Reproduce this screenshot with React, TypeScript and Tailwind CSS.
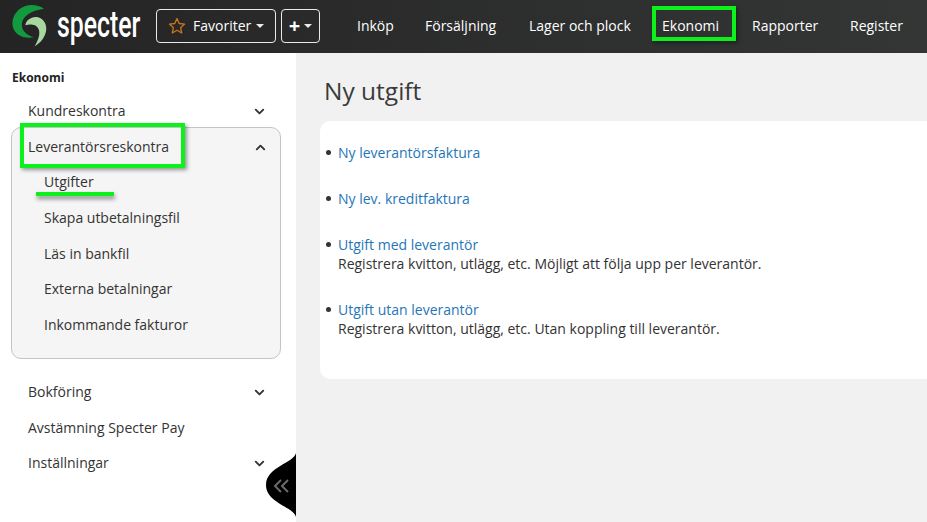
import React from 'react';
import { ChevronDown, ChevronUp } from 'lucide-react';

const Logo = () => (
  <svg width="42" height="46" viewBox="36 10 126 138" fill="none">
    <path
      d="M132 24C110 8 78 10 60 24C42 38 35 58 38 76C42 100 68 116 102 110C80 104 62 90 66 66C70 46 92 30 132 24Z"
      fill="#149a3e"
    />
    <path
      d="M76 74C78 58 96 46 114 50C132 54 142 74 138 92C134 112 120 128 104 137C112 122 119 108 118 94C117 82 110 74 98 72C90 71 84 71 76 74Z"
      fill="#a8d8a0"
    />
  </svg>
);

const Star = () => (
  <svg width="18" height="18" viewBox="0 0 18 18" fill="none">
    <path
      d="M9 1.500 11.200 6.500 16.600 7.100 12.600 10.700 13.700 16 9 13.300 4.300 16 5.400 10.700 1.400 7.100 6.800 6.500Z"
      stroke="#c9771a"
      strokeWidth="1.3"
      strokeLinejoin="round"
    />
  </svg>
);

const Caret = () => <span className="h-0 w-0 border-x-[4px] border-t-[4px] border-x-transparent border-t-white/90" />;

const SideRow = ({ label, open, chevron = true, h = 'h-[35.75px]' }: { label: string; open?: boolean; chevron?: boolean; h?: string }) => (
  <div className={`flex ${h} items-center justify-between pl-[28px] pr-[29px] text-[14px] text-[#333]`}>
    <span>{label}</span>
    {chevron && (open ? <ChevronUp className="mt-[2px]" size={15} strokeWidth={3} /> : <ChevronDown className="mt-[2px]" size={15} strokeWidth={3} />)}
  </div>
);

const SubRow = ({ label }: { label: string }) => (
  <div className="flex h-[35.75px] items-center pl-[32px] text-[14px] text-[#333]">{label}</div>
);

function ListItem({ link, text }: { link: string; text?: string }) {
  return (
    <div className="mb-[27px] flex">
      <span className="mt-[7px] mr-[7px] h-[5px] w-[5px] shrink-0 rounded-full bg-[#333]" />
      <div>
        <a className="block text-[#1f76b8]">{link}</a>
        {text && <div>{text}</div>}
      </div>
    </div>
  );
}

export default function App() {
  return (
    <div className="flex h-[522px] w-[927px] flex-col overflow-hidden bg-[#f1f1f1] font-['Open_Sans',sans-serif]">
      <header className="flex h-[53px] items-center bg-gradient-to-r from-[#242424] to-[#343635] pb-[2px] text-white">
        <div className="ml-[12px] flex items-center gap-[3px] pt-[2px]">
          <Logo />
          <span className="mb-[3px] w-[82px] origin-left scale-x-[0.69] font-['Roboto',sans-serif] text-[36px] leading-none font-medium whitespace-nowrap">
            specter
          </span>
        </div>
        <button className="ml-[17px] flex h-[34px] w-[120px] items-center gap-[5px] rounded-[4px] border border-white/90 pl-[11px] text-[14px]">
          <Star />
          <span className="ml-[2px]">Favoriter</span>
          <Caret />
        </button>
        <button className="ml-[5px] flex h-[34px] w-[39px] items-center justify-center gap-[4px] rounded-[4px] border border-white/90 text-[20px] leading-none font-bold">
          +
          <Caret />
        </button>
        <nav className="ml-[37px] flex items-center text-[14px]">
          <div className="w-[68px]">Inköp</div>
          <div className="w-[104px]">Försäljning</div>
          <div className="w-[133px]">Lager och plock</div>
          <div className="relative w-[90px]">
            Ekonomi
            <div className="absolute -top-[9px] -left-[10px] h-[35px] w-[84px] border-4 border-[#0cf01c] shadow-[2px_2px_4px_rgba(0,0,0,0.4)]" />
          </div>
          <div className="w-[98px]">Rapporter</div>
          <div>Register</div>
        </nav>
      </header>
      <div className="flex min-h-0 flex-1">
        <aside className="relative w-[296px] shrink-0 bg-white">
          <div className="pt-[17px] pl-[12px] text-[12px] leading-[16px] font-bold text-[#222]">Ekonomi</div>
          <div className="mt-[7px]">
            <SideRow label="Kundreskontra" />
          </div>
          <div className="relative -mt-[2px] ml-[11px] h-[232px] w-[270px] rounded-[10px] border border-[#c4c4c4] bg-[#f5f5f5] pt-[1px]">
            <div className="-mr-[17px] -ml-[12px]">
              <SideRow label="Leverantörsreskontra" open h="h-[35px]" />
            </div>
            <SubRow label="Utgifter" />
            <SubRow label="Skapa utbetalningsfil" />
            <SubRow label="Läs in bankfil" />
            <SubRow label="Externa betalningar" />
            <SubRow label="Inkommande fakturor" />
            <div className="absolute -top-[5px] left-[8px] h-[45px] w-[165px] border-4 border-[#0cf01c] shadow-[2px_2px_4px_rgba(0,0,0,0.4)]" />
            <div className="absolute top-[64px] left-[24px] h-[4px] w-[78px] bg-[#0cf01c] shadow-[1px_3px_4px_rgba(0,0,0,0.45)]" />
          </div>
          <div className="mt-[15px]">
            <SideRow label="Bokföring" />
            <SideRow label="Avstämning Specter Pay" chevron={false} h="h-[35.25px]" />
            <SideRow label="Inställningar" />
          </div>
          <svg className="absolute right-0 bottom-[5px]" width="30" height="64" viewBox="0 0 30 64">
            <path d="M30 0C28 10 0 14 0 32C0 50 28 54 30 64Z" fill="#000" />
            <path d="M15 27 9 33 15 39M22 27 16 33 22 39" stroke="#6a6a6a" strokeWidth="2" fill="none" />
          </svg>
        </aside>
        <main className="min-w-0 flex-1 pt-[23px] pl-[24px]">
          <h1 className="ml-[4px] text-[24.5px] leading-[30px] text-[#3a3a3a]">Ny utgift</h1>
          <div className="mt-[15px] h-[258px] rounded-l-[10px] bg-white pt-[22px] pl-[6px] text-[14px] leading-[19px] text-[#333]">
            <ListItem link="Ny leverantörsfaktura" />
            <ListItem link="Ny lev. kreditfaktura" />
            <ListItem link="Utgift med leverantör" text="Registrera kvitton, utlägg, etc. Möjligt att följa upp per leverantör." />
            <ListItem link="Utgift utan leverantör" text="Registrera kvitton, utlägg, etc. Utan koppling till leverantör." />
          </div>
        </main>
      </div>
    </div>
  );
}
